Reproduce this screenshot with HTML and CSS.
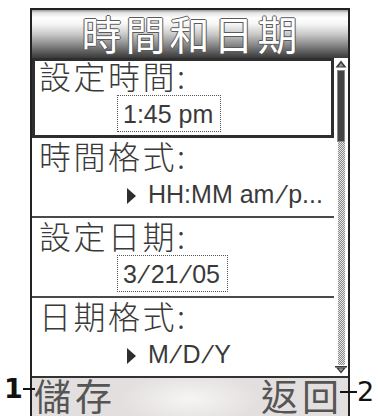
FILE: index.html
```html
<!DOCTYPE html>
<html lang="zh-Hant">
<head>
<meta charset="utf-8">
<title>時間和日期</title>
<link rel="stylesheet" href="styles.css">
</head>
<body>
<div class="page">
  <div class="screen">
    <div class="header">時間和日期</div>
    <div class="body">
      <div class="list">
        <div class="item sel">
          <div class="label">設定時間:</div>
          <div class="val box">1:45 pm</div>
        </div>
        <div class="item">
          <div class="label">時間格式:</div>
          <div class="val fmt"><span class="tri"></span>HH:MM am<span class="sl">/</span>p...</div>
        </div>
        <div class="item">
          <div class="label">設定日期:</div>
          <div class="val box">3<span class="sl">/</span>21<span class="sl">/</span>05</div>
        </div>
        <div class="item last">
          <div class="label">日期格式:</div>
          <div class="val fmt"><span class="tri"></span>M<span class="sl">/</span>D<span class="sl">/</span>Y</div>
        </div>
      </div>
      <div class="scroll">
        <svg class="arrow" width="12" height="8" viewBox="0 0 12 8"><polygon points="6,0.5 11.5,7.5 0.5,7.5" fill="#3a3a3a"/><polygon points="6,3 8.5,6.5 3.5,6.5" fill="#9a9a9a"/></svg>
        <div class="thumb"></div>
        <div class="track"></div>
        <svg class="arrow down" width="12" height="8" viewBox="0 0 12 8"><rect x="0" y="0" width="12" height="1.5" fill="#3a3a3a"/><polygon points="1,1.5 11,1.5 6,7.5" fill="#3a3a3a"/><polygon points="3.5,2.5 8.5,2.5 6,5.5" fill="#9a9a9a"/></svg>
      </div>
    </div>
    <div class="softkeys"><span>儲存</span><span>返回</span></div>
  </div>
  <div class="callout c1">1<i class="dash"></i></div>
  <div class="callout c2"><i class="dash"></i>2</div>
</div>
</body>
</html>
```

FILE: styles.css
```css
html, body {
  margin: 0;
  padding: 0;
  background: #ffffff;
  overflow: hidden;
}

.page {
  position: relative;
  width: 378px;
  height: 416px;
  padding-top: 8px;
  box-sizing: border-box;
}

.screen {
  margin-left: 30px;
  width: 320px;
  height: 408px;
  box-sizing: border-box;
  border: 2px solid #222222;
  border-bottom: 0;
  display: flex;
  flex-direction: column;
}

.header {
  flex: none;
  height: 48px;
  box-sizing: border-box;
  padding: 1px 0 0 3px;
  background: linear-gradient(to bottom, #9a9a9a 0px, #e6e6e6 3px, #fefefe 8px, #f6f6f6 14px, #cacaca 24px, #8e8e8e 34px, #5c5c5c 42px, #3a3a3a 48px);
  font-family: "Noto Sans CJK TC", "Noto Sans CJK SC", sans-serif;
  font-size: 40px;
  line-height: 44px;
  letter-spacing: 4px;
  text-align: center;
  color: #ffffff;
  text-shadow: 1px 0 0 #5a5a5a, -1px 0 0 #5a5a5a, 0 1px 0 #5a5a5a, 0 -1px 0 #5a5a5a;
  white-space: nowrap;
}

.body {
  flex: none;
  height: 318px;
  display: flex;
}

.list {
  flex: none;
  width: 302px;
}

.item {
  height: 80px;
  box-sizing: border-box;
  border-bottom: 2px solid #4a4a4a;
  padding-left: 7px;
}

.item.last {
  height: 78px;
  border-bottom: 0;
}

.item.sel {
  outline: 3px solid #2e2e2e;
  outline-offset: -3px;
}

.label {
  font-family: "Noto Sans CJK TC", "Noto Sans CJK SC", sans-serif;
  font-weight: 300;
  font-size: 32px;
  line-height: 34px;
  letter-spacing: 2.5px;
  color: #3a3a3a;
  margin-bottom: 3px;
  white-space: nowrap;
}

.val {
  height: 37px;
  box-sizing: border-box;
  font-family: "Liberation Sans", Arial, sans-serif;
  font-size: 25px;
  line-height: 33px;
  color: #3a3a3a;
  white-space: nowrap;
}

.box {
  width: fit-content;
  margin-left: 78px;
  border: 1px dotted #555555;
  padding: 2px 7px 0 5px;
}

.fmt {
  margin-left: 88px;
  padding-top: 3px;
}

.tri {
  display: inline-block;
  width: 0;
  height: 0;
  border-left: 9px solid #2e2e2e;
  border-top: 8px solid transparent;
  border-bottom: 8px solid transparent;
  margin-right: 12px;
  vertical-align: -1px;
}

.sl {
  display: inline-block;
  margin: 0 3.4px;
  transform: skewX(-18deg);
}

.scroll {
  flex: none;
  width: 14px;
  display: flex;
  flex-direction: column;
  align-items: center;
  padding: 2px 0;
  box-sizing: border-box;
}

.arrow {
  display: block;
  flex: none;
}

.arrow.down {
  margin-top: 1px;
}

.thumb {
  flex: none;
  margin-top: 2px;
  width: 8px;
  height: 72px;
  box-sizing: border-box;
  background: #444444;
  border: 1px solid #8a8a8a;
}

.track {
  flex: 1;
  width: 7px;
  background: repeating-conic-gradient(#8a8a8a 0 25%, #e6e6e6 0 50%) 0 0 / 2px 2px;
}

.softkeys {
  flex: 1;
  border-top: 2px solid #333333;
  background: radial-gradient(ellipse 70px 26px at 50% 55%, #f6f4f4, rgba(246, 244, 244, 0)), #e3dfdf;
  display: flex;
  justify-content: space-between;
  padding: 0 5px 0 2px;
  font-family: "Noto Sans CJK TC", "Noto Sans CJK SC", sans-serif;
  font-size: 37px;
  line-height: 34px;
  letter-spacing: 4px;
  color: #555555;
  overflow: hidden;
}

.callout {
  position: absolute;
  display: flex;
  align-items: center;
  height: 27px;
  font-family: "DejaVu Sans", sans-serif;
  font-size: 27px;
  line-height: 27px;
  color: #111111;
}

.c1 {
  left: 4px;
  top: 375px;
  font-weight: bold;
}

.c2 {
  left: 340px;
  top: 378px;
}

.dash {
  display: block;
  height: 2px;
  background: #111111;
}

.c1 .dash {
  width: 12px;
}

.c2 .dash {
  width: 17px;
}
```
